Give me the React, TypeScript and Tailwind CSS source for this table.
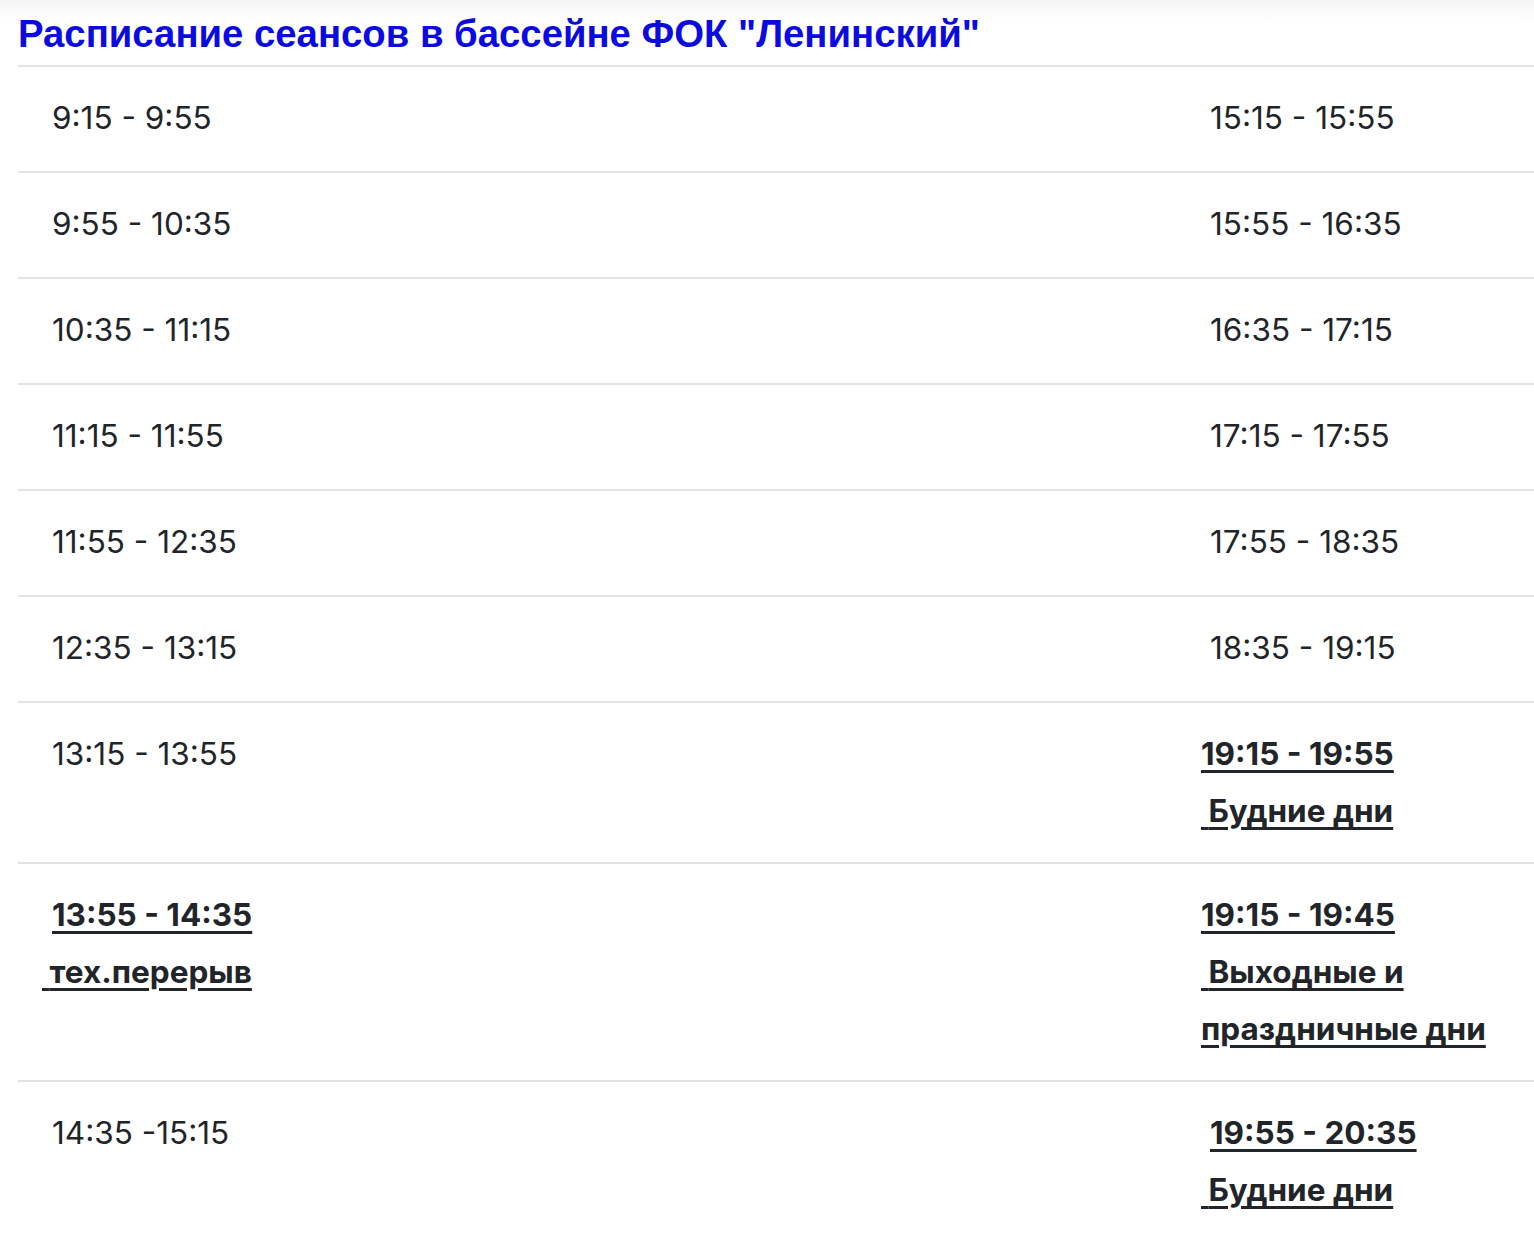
const rows: { left: React.ReactNode; right: React.ReactNode; multi?: boolean }[] = [
  { left: '9:15 - 9:55', right: '15:15 - 15:55' },
  { left: '9:55 - 10:35', right: '15:55 - 16:35' },
  { left: '10:35 - 11:15', right: '16:35 - 17:15' },
  { left: '11:15 - 11:55', right: '17:15 - 17:55' },
  { left: '11:55 - 12:35', right: '17:55 - 18:35' },
  { left: '12:35 - 13:15', right: '18:35 - 19:15' },
  {
    left: '13:15 - 13:55',
    right: (
      <b className="block -ml-[9px] underline underline-offset-[5px] decoration-[3px]">
        19:15 - 19:55
        <br />
        {'\u00a0'}Будние дни
      </b>
    ),
    multi: true,
  },
  {
    left: (
      <b className="block underline underline-offset-[5px] decoration-[3px]">
        13:55 - 14:35
        <br />
        <span className="-ml-[10px]">{'\u00a0'}тех.перерыв</span>
      </b>
    ),
    right: (
      <b className="block -ml-[9px] underline underline-offset-[5px] decoration-[3px]">
        19:15 - 19:45
        <br />
        {'\u00a0'}Выходные и
        <br />
        праздничные дни
      </b>
    ),
    multi: true,
  },
  {
    left: '14:35 -15:15',
    right: (
      <b className="block underline underline-offset-[5px] decoration-[3px]">
        19:55 - 20:35
        <br />
        <span className="-ml-[9px]">{'\u00a0'}Будние дни</span>
      </b>
    ),
    multi: true,
  },
];

export default function App() {
  return (
    <div className="min-h-[1246px] bg-gradient-to-b from-[#f4f4f4] via-white to-white bg-[length:100%_40px] bg-no-repeat bg-white pl-[18px] overflow-hidden">
      <h1
        className="h-[65px] pt-[11px] text-[38.3px] leading-[46px] font-bold text-[#0b0be0] whitespace-nowrap"
        style={{ fontFamily: '"Liberation Sans", Arial, sans-serif' }}
      >
        Расписание сеансов в бассейне ФОК "Ленинский"
      </h1>
      <div className="text-[#212529] text-[31.5px] leading-[57px]" style={{ fontFamily: 'Inter, "Noto Sans", sans-serif' }}>
        {rows.map((r, i) => (
          <div
            key={i}
            className={`grid grid-cols-[1158px_1fr] border-t-2 border-[#e1e3e7] pt-[22px] ${r.multi ? 'pb-[23px]' : 'pb-[25px]'}`}
          >
            <div className="pl-[34px]">{r.left}</div>
            <div className="pl-[34px] whitespace-nowrap">{r.right}</div>
          </div>
        ))}
      </div>
    </div>
  );
}
